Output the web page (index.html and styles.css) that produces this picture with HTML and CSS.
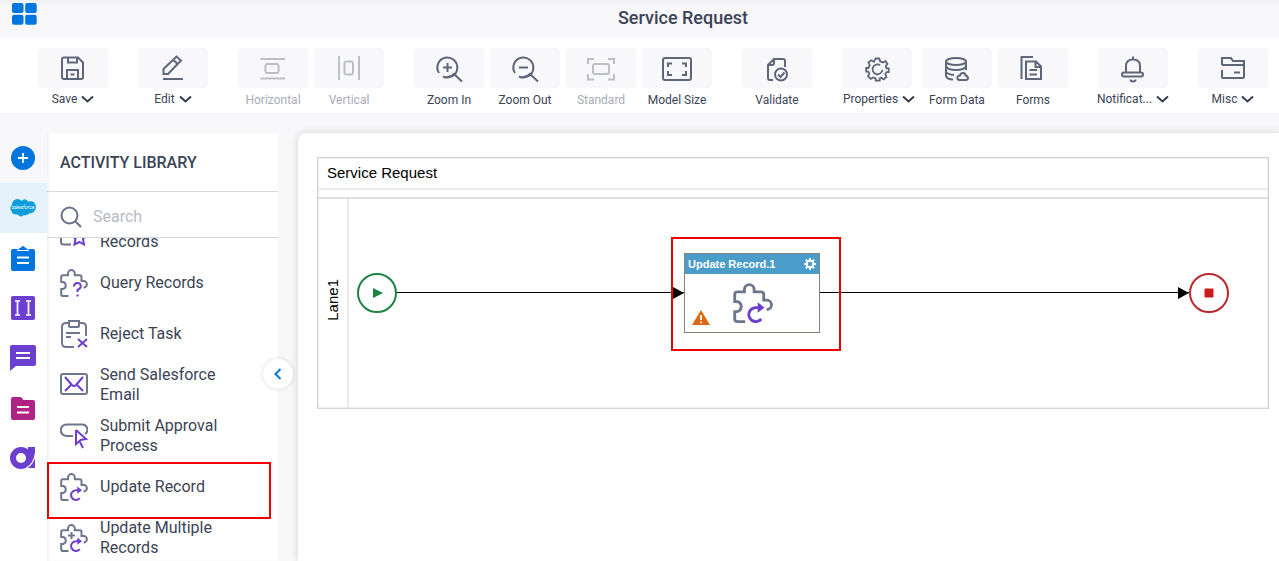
FILE: index.html
```html
<!DOCTYPE html>
<html lang="en">
<head>
    <meta charset="UTF-8">
    <meta name="viewport" content="width=device-width, initial-scale=1.0">
    <title>Service Request</title>
    <link rel="stylesheet" href="styles.css">
</head>
<body>
    <!-- Shared icon shapes -->
    <svg class="sprite" aria-hidden="true">
        <symbol id="puzzle" viewBox="0 0 28 28">
            <path d="M8.5 27H3Q1.2 27 1.2 25.2V20H3A3.6 3.6 0 0 0 3 13H1.2V8Q1.2 6.2 3 6.2H8V4.5A3.4 3.4 0 0 1 14.8 4.5V6.2H19.7Q21.5 6.2 21.5 8V12H23.6A3.2 3.2 0 0 1 23.6 18.6"/>
        </symbol>
        <symbol id="refresh" viewBox="0 0 28 28">
            <path d="M18 17.2H16A4.9 4.9 0 1 0 19.8 25.2"/>
            <path class="solid" d="M17.3 13.5L22 17.2L17.3 20.8Z"/>
        </symbol>
        <symbol id="chevron" viewBox="0 0 13 8">
            <path d="M1 1.5L6.5 6.5L12 1.5"/>
        </symbol>
    </svg>

    <header class="header">
        <button class="apps-btn" aria-label="Apps">
            <svg width="25" height="22" viewBox="0 0 25 22"><rect width="11.5" height="10" rx="2"/><rect x="13.2" width="11.5" height="10" rx="2"/><rect y="11.7" width="11.5" height="10" rx="2"/><rect x="13.2" y="11.7" width="11.5" height="10" rx="2"/></svg>
        </button>
        <h1>Service Request</h1>
    </header>

    <div class="toolbar">
        <div class="group">
            <button class="tool menu">
                <span class="tile"><svg class="icon" viewBox="0 0 28 28"><path d="M5 3.500H19L24 8.500V23Q24 25 22 25H5Q3 25 3 23V5.500Q3 3.500 5 3.500ZM9 3.500V8.500H18V3.500M8 25V16H19V25M11.500 20.500H15.500"/></svg></span>
                <span class="label">Save <svg class="chevron"><use href="#chevron"/></svg></span>
            </button>
        </div>
        <div class="group">
            <button class="tool menu">
                <span class="tile"><svg class="icon" viewBox="0 0 28 28"><path d="M4 25H24M4.500 20V15L17.500 2.500L22 6.500L9 20ZM14.500 6L18.500 10"/></svg></span>
                <span class="label">Edit <svg class="chevron"><use href="#chevron"/></svg></span>
            </button>
        </div>
        <div class="group">
            <button class="tool" disabled>
                <span class="tile"><svg class="icon" viewBox="0 0 28 28"><path d="M1.500 5H26M1.500 24.500H26"/><rect x="6.500" y="10" width="13" height="9" rx="2"/></svg></span>
                <span class="label">Horizontal</span>
            </button>
            <button class="tool" disabled>
                <span class="tile"><svg class="icon" viewBox="0 0 28 28"><path d="M4 2V26M24 2V26"/><rect x="9.500" y="7.500" width="8.500" height="13" rx="2"/></svg></span>
                <span class="label">Vertical</span>
            </button>
        </div>
        <div class="group">
            <button class="tool">
                <span class="tile"><svg class="icon" viewBox="0 0 28 28"><path d="M4 19A10 10 0 1 1 8 22.500M11 23.300A10 10 0 0 0 19 20L27 27.500M12.500 9V18M8 13.500H17"/></svg></span>
                <span class="label">Zoom In</span>
            </button>
            <button class="tool">
                <span class="tile"><svg class="icon" viewBox="0 0 28 28"><path d="M4 19A10 10 0 1 1 8 22.500M11 23.300A10 10 0 0 0 19 20L27 27.500M8 13.500H17"/></svg></span>
                <span class="label">Zoom Out</span>
            </button>
            <button class="tool" disabled>
                <span class="tile"><svg class="icon" viewBox="0 0 28 28"><path d="M1 10V5H7M21 5H27V10M1 20V25.500H7M21 25.500H27V20"/><rect x="6" y="10" width="16" height="10" rx="2"/></svg></span>
                <span class="label">Standard</span>
            </button>
            <button class="tool">
                <span class="tile"><svg class="icon" viewBox="0 0 28 28"><rect x="0" y="4" width="28" height="22" rx="2"/><path d="M5 13V9.500H9M19 9.500H23V13M5 17V21H9M19 21H23V17"/></svg></span>
                <span class="label">Model Size</span>
            </button>
        </div>
        <div class="group">
            <button class="tool">
                <span class="tile"><svg class="icon" viewBox="0 0 28 28"><path d="M22 13V7Q22 5 20 5H11L5 11V24Q5 26 7 26H10M11 5V9Q11 11 9 11H5"/><circle cx="18" cy="20.500" r="6"/><path d="M15 20.500L17.500 23L21.500 18.500"/></svg></span>
                <span class="label">Validate</span>
            </button>
        </div>
        <div class="group">
            <button class="tool menu wide">
                <span class="tile"><svg class="icon" viewBox="-2 -2 31 31"><path d="M12 3H16L17 6L20 7.300L23 6L25 9L23.200 11.500L24 14H26.500V18H24L22.700 20.500L24 23.500L21 26L18 24L16.500 25V27.500H12V25L9.500 24L6.500 25.500L3.500 22.500L5 20L4 17.500H1.500V13.500H4L5.500 10.500L4 7.500L7 5L10 6.700Z"/><path d="M17 10.300A5.500 5.500 0 1 0 19.500 15.500M13 20.800H14"/></svg></span>
                <span class="label">Properties <svg class="chevron"><use href="#chevron"/></svg></span>
            </button>
            <button class="tool">
                <span class="tile"><svg class="icon" viewBox="0 0 28 28"><ellipse cx="13" cy="7.500" rx="10" ry="3.500"/><path d="M3 7.500V22Q4 25.500 10 25.500M23 7.500V16M3 12.500Q5 16 13 16T23 12.500M3 18Q5 20.500 11 21M16 26Q14 25.500 14.500 23Q15 21.500 17 21.500Q18 18.500 20.500 19Q22.500 19.500 22.500 21.500Q25 22 25 24.500Q24.500 26 23 26Z"/></svg></span>
                <span class="label">Form Data</span>
            </button>
            <button class="tool">
                <span class="tile"><svg class="icon" viewBox="0 0 28 28"><path d="M2.500 25V3H14M7 7.500H17L22 12.500V25H7ZM16.500 8V13H22M10.500 16H18M10.500 20.500H18"/></svg></span>
                <span class="label">Forms</span>
            </button>
        </div>
        <div class="group">
            <button class="tool menu">
                <span class="tile"><svg class="icon" viewBox="0 0 28 28"><path d="M14 2.500V5M7 18.500V12Q7 5.500 14 5.500T21 12V18.500M5 18.500H22Q24 18.500 24 20.500T22 22.500H5Q3 22.500 3 20.500T5 18.500ZM11.500 25.500Q11.500 27.500 14 27.500T16.500 25.500"/></svg></span>
                <span class="label">Notificat... <svg class="chevron"><use href="#chevron"/></svg></span>
            </button>
        </div>
        <div class="group">
            <button class="tool menu">
                <span class="tile"><svg class="icon" viewBox="0 0 28 28"><path d="M3 11V4H12L14 7H25V23Q25 24 24 24H4Q3 24 3 23V16M3 11H25M15 18.500H21"/></svg></span>
                <span class="label">Misc <svg class="chevron"><use href="#chevron"/></svg></span>
            </button>
        </div>
    </div>

    <main class="workspace">
        <nav class="rail" aria-label="Libraries">
            <div class="rail-top">
                <button class="rail-btn" aria-label="Add">
                    <svg viewBox="0 0 26 26"><circle cx="13" cy="13" r="12" fill="#0076de"/><path d="M13 8V18M8 13H18" stroke="#fff" stroke-width="1.800"/></svg>
                </button>
            </div>
            <button class="rail-btn active" aria-label="Salesforce">
                <svg viewBox="0 0 26 26"><path fill="#0d9ddb" d="M2 10Q2 5 7 4Q10 4 11.500 6Q15 2.500 18 6.500Q25 5 26 12Q25 18.500 19 18.500Q17 21 14 20Q11 23 7.500 19.500Q2 20 1.500 16Q-1 13 2 10Z"/><text x="13" y="14">salesforce</text></svg>
            </button>
            <button class="rail-btn" aria-label="Tasks">
                <svg viewBox="0 0 26 26"><path fill="#0076de" d="M3 4H8V6H18V4H23Q25 4 25 6V24Q25 26 23 26H3Q1 26 1 24V6Q1 4 3 4Z"/><path fill="#0076de" stroke="#fff" d="M7.500 5.500Q8 2.500 10.500 2.500Q13-1.500 15.500 2.500Q18 2.500 18.500 5.500Z"/><path stroke="#fff" stroke-width="2" d="M7 12.500H19M7 18H19"/></svg>
            </button>
            <button class="rail-btn" aria-label="Fields">
                <svg viewBox="0 0 26 26"><rect x="1" y="1" width="24" height="24" rx="2" fill="#6c3fd1"/><path stroke="#fff" stroke-width="1.700" fill="none" d="M5 6H10M7.500 6V20M5 20H10M16 6H21M18.500 6V20M16 20H21"/></svg>
            </button>
            <button class="rail-btn" aria-label="Messages">
                <svg viewBox="0 0 26 26"><path fill="#6c3fd1" d="M2 0H24Q26 0 26 2V19Q26 21 24 21H6L0 26V2Q0 0 2 0Z"/><path stroke="#fff" stroke-width="2" d="M6 8H20M6 13H20"/></svg>
            </button>
            <button class="rail-btn" aria-label="Documents">
                <svg viewBox="0 0 26 26"><path fill="#af2384" d="M3 2H11L13.500 5H23Q25 5 25 7V23Q25 25 23 25H3Q1 25 1 23V4Q1 2 3 2Z"/><path stroke="#fff" stroke-width="2" d="M7 12H19M7 17.500H19"/></svg>
            </button>
            <button class="rail-btn" aria-label="Agent">
                <svg viewBox="0 0 26 26"><circle cx="11" cy="13" r="8" fill="none" stroke="#6c3fd1" stroke-width="6"/><path fill="#6c3fd1" d="M18 2H25V23H18Z"/><path fill="none" stroke="#fff" stroke-width="1.200" d="M25.500 8Q24 19 16 23.500"/></svg>
            </button>
        </nav>

        <aside class="library">
            <h2>ACTIVITY LIBRARY</h2>
            <label class="search">
                <svg viewBox="0 0 22 22"><circle cx="9.500" cy="9.500" r="8"/><path d="M15.500 15.500L21 21"/></svg>
                <input type="text" placeholder="Search" aria-label="Search">
            </label>
            <ul class="activities" id="activities">
                <li>
                    <svg class="activity-icon" viewBox="0 0 28 28"><path d="M1 18V24Q1 26.500 3.500 26.500H11"/><path class="accent" d="M13 18.500L15.500 21L14.500 26.500L19.500 24L24 26.500L23 21L25 18.500"/></svg>
                    <span><br>Records</span>
                </li>
                <li>
                    <svg class="activity-icon" viewBox="0 0 28 28"><use href="#puzzle"/><path class="accent" d="M14 17.500Q14 14 17.500 14T20.700 17.500Q20.700 19.500 17.500 21V23M17.500 25.500V27.500"/></svg>
                    <span>Query Records</span>
                </li>
                <li>
                    <svg class="activity-icon" viewBox="0 0 28 28"><path d="M8 3H6Q2 3 2 7V23Q2 27 6 27H14M20 3H22Q26 3 26 7V16M9 1H19V6Q19 7 18 7H10Q9 7 9 6ZM6 13H20M6 17H11"/><path class="accent" d="M18 19L27 27M27 19L18 27"/></svg>
                    <span>Reject Task</span>
                </li>
                <li>
                    <svg class="activity-icon" viewBox="0 0 28 28"><rect x="1" y="3" width="26" height="20" rx="2"/><path class="accent" d="M5 6L12 14Q14 16 16 14L23 6M5 20L11 14M23 20L17 14"/></svg>
                    <span>Send Salesforce Email</span>
                </li>
                <li>
                    <svg class="activity-icon" viewBox="0 0 28 28"><path d="M13 14H6.500A5.200 5.200 0 0 1 6.500 2.500H21.500A5.200 5.200 0 0 1 25 12"/><path class="accent" d="M16 8V22L19.500 19L23 26M16 8L26 17L20 18"/></svg>
                    <span>Submit Approval Process</span>
                </li>
                <li class="marked">
                    <svg class="activity-icon" viewBox="0 0 28 28"><use href="#puzzle"/><use class="accent" href="#refresh"/></svg>
                    <span>Update Record</span>
                </li>
                <li>
                    <svg class="activity-icon" viewBox="0 0 28 28"><use href="#puzzle"/><path d="M11.500 8V15M8 11.500H15"/><use class="accent" href="#refresh"/></svg>
                    <span>Update Multiple Records</span>
                </li>
            </ul>
            <button class="collapse-btn" aria-label="Collapse library">
                <svg viewBox="0 0 8 12"><path d="M6.500 1L1.500 6L6.500 11"/></svg>
            </button>
        </aside>

        <section class="canvas">
            <div class="pool">
                <div class="pool-title">Service Request</div>
                <div class="pool-phase"></div>
                <div class="lane">
                    <div class="lane-name"><span>Lane1</span></div>
                    <div class="flow">
                        <svg class="event" viewBox="0 0 40 40"><circle cx="20" cy="20" r="19" stroke="#1f8443"/><path fill="#1f8443" d="M16 15L26 20L16 25Z"/></svg>
                        <div class="connector first"></div>
                        <div class="task">
                            <div class="task-head">
                                <span>Update Record.1</span>
                                <svg class="gear" viewBox="0 0 12 12"><circle cx="6" cy="6" r="3.300"/><path d="M6 0V2.500M6 9.500V12M0 6H2.500M9.500 6H12M1.800 1.800L3.500 3.500M8.500 8.500L10.200 10.200M10.200 1.800L8.500 3.500M3.500 8.500L1.800 10.200"/></svg>
                            </div>
                            <div class="task-body">
                                <svg class="warning" viewBox="0 0 18 15"><path fill="#dc6a14" d="M9 0L18 15H0Z"/><path stroke="#fff" stroke-width="1.800" d="M9 5V10M9 11.500V13.300"/></svg>
                                <svg class="task-icon" viewBox="0 0 28 28"><use href="#puzzle"/><use class="accent" href="#refresh"/></svg>
                            </div>
                        </div>
                        <div class="connector"></div>
                        <svg class="event" viewBox="0 0 40 40"><circle cx="20" cy="20" r="19" stroke="#b9292f"/><rect x="15.500" y="15.500" width="9" height="9" rx="1" fill="#cb1b1b"/></svg>
                    </div>
                </div>
            </div>
        </section>
    </main>

    <script>
        // Open the list a little way down
        document.getElementById('activities').scrollTop = 32;
    </script>
</body>
</html>
```
FILE: styles.css
```css
* {
    box-sizing: border-box;
}

body {
    display: flex;
    flex-direction: column;
    height: 100vh;
    margin: 0;
    overflow: hidden;
    background: #f8f8fb;
    color: #3c4356;
    font-family: Roboto, sans-serif;
}

button {
    padding: 0;
    border: none;
    background: none;
    color: inherit;
    font: inherit;
    cursor: pointer;
}

svg {
    flex: none;
    display: block;
}

.sprite {
    position: absolute;
    width: 0;
    height: 0;
}

.header {
    flex: none;
    display: flex;
    align-items: flex-start;
    height: 38px;
    background: linear-gradient(#f1f1f4, #f8f8fb 6px);
}

.apps-btn {
    width: 87px;
    padding: 3px 12px;
    fill: #0076de;
}

h1 {
    flex: 1;
    margin: 0;
    font-size: 18px;
    font-weight: 500;
    line-height: 36px;
    text-align: center;
}

/* Toolbar */
.toolbar {
    flex: none;
    display: flex;
    gap: 30px;
    height: 75px;
    padding: 10px 0 0 38px;
    background: white;
}

.group {
    display: flex;
    gap: 6px;
}

.tool {
    display: flex;
    flex-direction: column;
    width: 70px;
    font-size: 12px;
}

.tool.wide {
    width: 74px;
}

.tile {
    display: flex;
    align-items: center;
    justify-content: center;
    width: 70px;
    height: 40px;
    border-radius: 4px;
    background: #f8f8fb;
}

.icon {
    width: 28px;
    height: 28px;
    overflow: visible;
    fill: none;
    stroke: #5f6679;
    stroke-width: 2;
}

.label {
    display: flex;
    align-items: center;
    justify-content: center;
    gap: 4px;
    width: 100%;
    line-height: 24px;
    white-space: nowrap;
}

.menu .label {
    line-height: 22px;
}

.chevron {
    width: 13px;
    height: 8px;
    fill: none;
    stroke: #343b4f;
    stroke-width: 2;
}

.tool:disabled {
    color: #a9acb6;
}

.tool:disabled .icon {
    stroke: #bcbfc8;
}

/* Left rail */
.workspace {
    flex: 1;
    display: flex;
    min-height: 0;
}

.rail {
    flex: none;
    width: 47px;
    background: white;
}

.rail-top {
    padding-top: 20px;
    background: #f8f8fb;
}

.rail-btn {
    display: flex;
    align-items: center;
    width: 100%;
    height: 50px;
    padding-left: 10px;
}

.rail-btn.active {
    background: #e5f1fb;
}

.rail-btn svg {
    width: 26px;
    height: 26px;
}

.rail-btn text {
    fill: white;
    font-size: 5px;
    font-style: italic;
    text-anchor: middle;
}

/* Activity library */
.library {
    position: relative;
    z-index: 1;
    flex: none;
    display: flex;
    flex-direction: column;
    width: 231px;
    margin-top: 20px;
    background: white;
    box-shadow: inset 2px 0 2px #f3f3f6;
}

h2 {
    flex: none;
    margin: 0;
    padding: 2px 13px 0;
    border-bottom: 1px solid #d6d8de;
    font-size: 16px;
    font-weight: 500;
    line-height: 56px;
}

.search {
    flex: none;
    display: flex;
    align-items: center;
    gap: 11px;
    height: 46px;
    padding: 4px 13px 0;
    border-bottom: 1px solid #d6d8de;
}

.search svg {
    width: 22px;
    height: 22px;
    fill: none;
    stroke: #68718a;
    stroke-width: 2;
}

.search input {
    flex: 1;
    min-width: 0;
    padding: 0;
    border: none;
    outline: none;
    background: none;
    color: inherit;
    font: 16px Roboto, sans-serif;
}

.search input::placeholder {
    color: #b8bbc4;
}

.activities {
    flex: 1;
    min-height: 0;
    margin: 0;
    padding: 0;
    overflow: auto;
    list-style: none;
    scrollbar-width: none;
}

.activities li {
    position: relative;
    display: flex;
    align-items: center;
    gap: 12px;
    height: 51px;
    padding: 0 30px 0 13px;
    font-size: 16px;
    line-height: 20px;
}

.activities li.marked::after {
    content: "";
    position: absolute;
    z-index: 1;
    inset: 1px 7px -7px 0;
    border: 2px solid #f00000;
}

.activity-icon,
.task-icon {
    width: 28px;
    height: 28px;
    fill: none;
    stroke: #6d768c;
    stroke-width: 2;
}

.accent {
    stroke: #6c3fd1;
}

.solid {
    fill: #6c3fd1;
    stroke: none;
}

.collapse-btn {
    position: absolute;
    top: 226px;
    right: -15px;
    display: flex;
    align-items: center;
    justify-content: center;
    width: 30px;
    height: 30px;
    border-radius: 50%;
    background: white;
    box-shadow: 0 0 4px rgba(0, 0, 0, 0.15);
}

.collapse-btn svg {
    width: 8px;
    height: 12px;
    fill: none;
    stroke: #0076de;
    stroke-width: 2;
}

/* Process canvas */
.canvas {
    flex: 1;
    min-width: 0;
    margin: 20px 0 0 20px;
    padding: 24px 10px 24px 19px;
    border-radius: 8px 0 0 0;
    background: white;
    box-shadow: 0 0 8px rgba(0, 0, 0, 0.15);
    color: black;
    font-family: "Liberation Sans", Arial, sans-serif;
}

.pool {
    border: 1px solid #d4d4d4;
    box-shadow: inset 0 0 0 1px #eeeeee;
}

.pool-title {
    height: 32px;
    padding: 0 9px;
    border-bottom: 2px solid #ebebeb;
    font-size: 15px;
    line-height: 30px;
}

.pool-phase {
    height: 9px;
    border-bottom: 2px solid #dfdfdf;
}

.lane {
    display: flex;
    height: 209px;
}

.lane-name {
    display: flex;
    align-items: center;
    justify-content: center;
    width: 31px;
    padding-bottom: 8px;
    border-right: 2px solid #ebebeb;
    font-size: 15px;
}

.lane-name span {
    writing-mode: vertical-rl;
    transform: rotate(180deg);
}

.flow {
    flex: 1;
    display: flex;
    align-items: center;
    padding: 0 39px 22px 8px;
}

.event {
    width: 40px;
    height: 40px;
    fill: none;
    stroke-width: 2;
}

.connector {
    position: relative;
    flex: 1;
    height: 1px;
    background: black;
}

.connector.first {
    flex: none;
    width: 287px;
}

.connector::after {
    content: "";
    position: absolute;
    z-index: 2;
    top: -5px;
    right: 0;
    border-left: 11px solid black;
    border-top: 6px solid transparent;
    border-bottom: 6px solid transparent;
}

.task {
    position: relative;
    width: 136px;
    height: 80px;
    border: 1px solid #85827a;
}

.task::after {
    content: "";
    position: absolute;
    z-index: 1;
    inset: -17px -22px -19px -14px;
    border: 2px solid #f00000;
}

.task-head {
    display: flex;
    align-items: center;
    justify-content: space-between;
    height: 20px;
    padding: 0 3px;
    background: #4a9dc9;
    color: white;
    font-size: 11px;
    font-weight: bold;
}

.gear {
    width: 12px;
    height: 12px;
    fill: none;
    stroke: white;
    stroke-width: 2;
}

.task-body {
    display: flex;
    align-items: flex-end;
    gap: 23px;
    height: 58px;
    padding: 0 7px 7px;
}

.warning {
    width: 18px;
    height: 15px;
}

.task-icon {
    width: 40px;
    height: 40px;
    margin-bottom: 2px;
}
```
